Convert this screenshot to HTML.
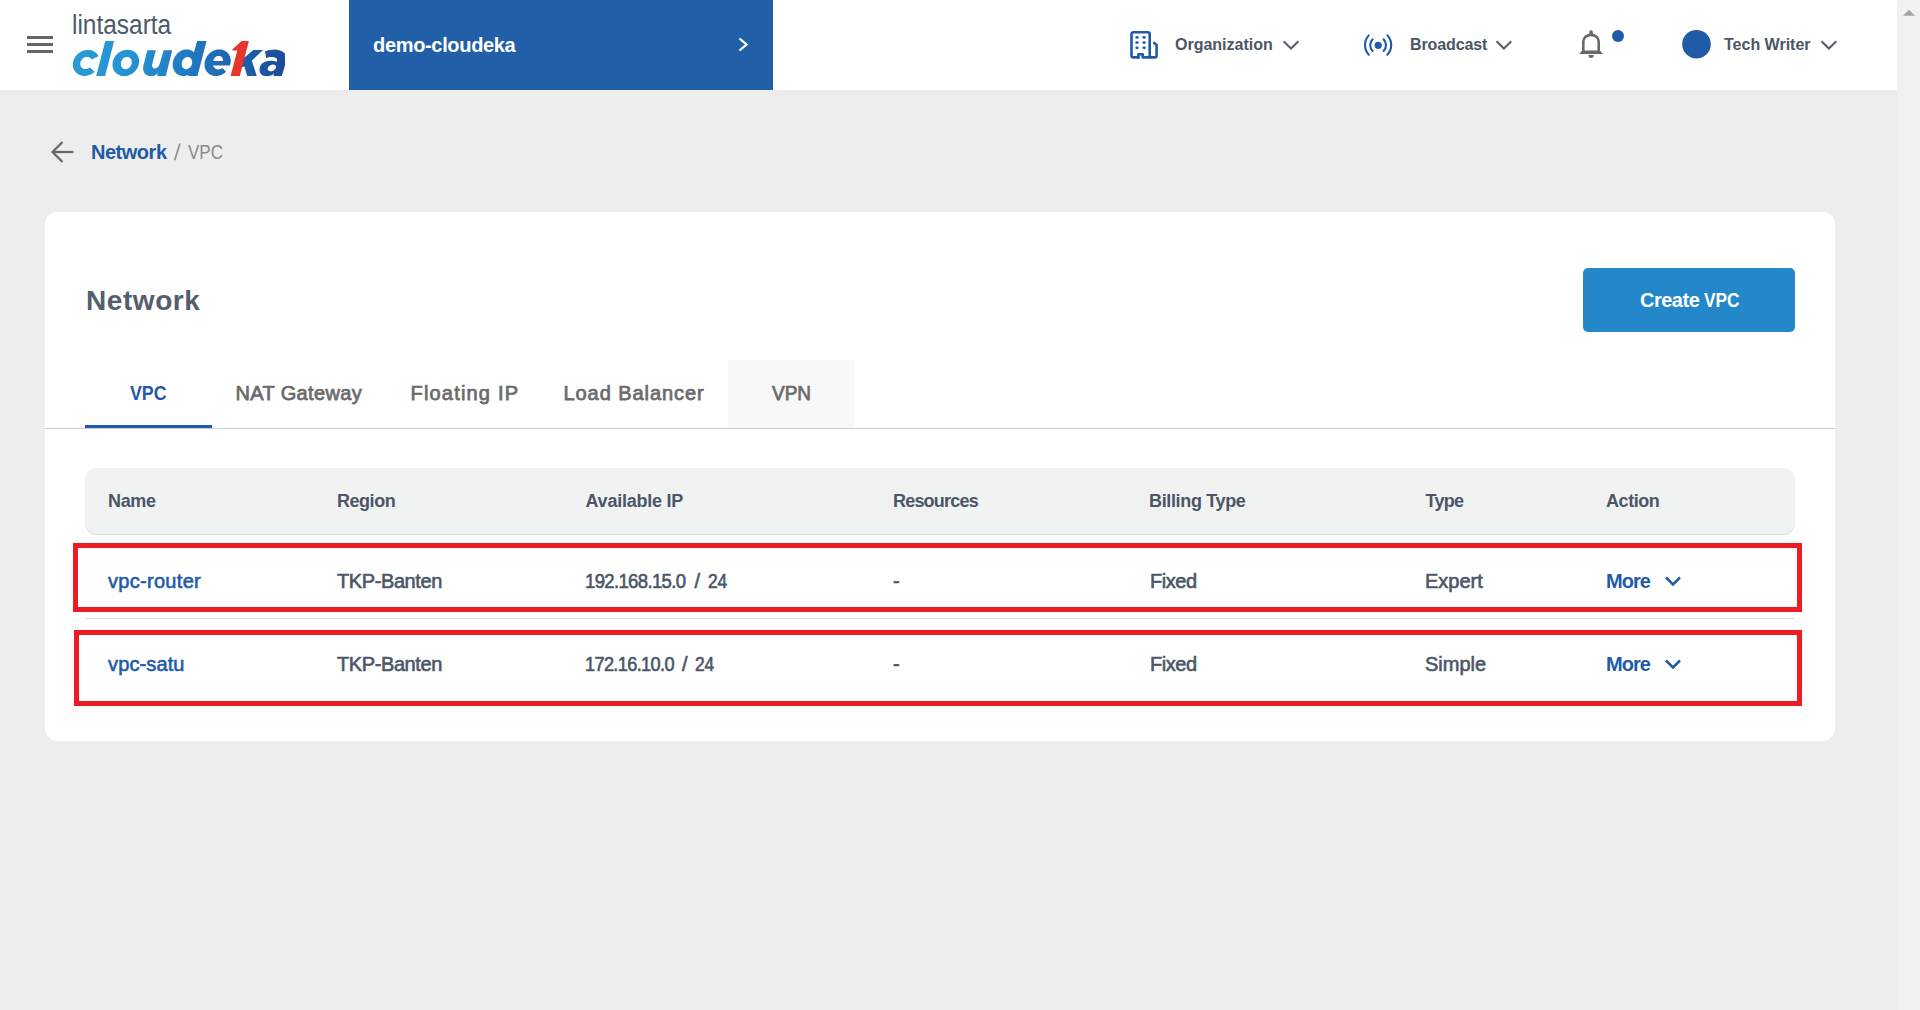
<!DOCTYPE html>
<html>
<head>
<meta charset="utf-8">
<style>
html,body{margin:0;padding:0;width:1920px;height:1010px;overflow:hidden;background:#ededed;}
body{position:relative;font-family:"Liberation Sans",sans-serif;}
.a{position:absolute;white-space:nowrap;line-height:1;}
.b{font-weight:bold;}
#hdr{position:absolute;left:0;top:0;width:1897px;height:90px;background:#fff;}
#proj{position:absolute;left:349px;top:0;width:424px;height:90px;background:#2160a8;}
#sb{position:absolute;left:1897px;top:0;width:23px;height:1010px;background:#f1f1f1;}
#card{position:absolute;left:45px;top:212px;width:1790px;height:529px;background:#fff;border-radius:12px;}
.slate{color:#4b5668;}
.blue{color:#1f5ba8;}
.tab{color:#6b6b6b;font-size:20px;font-weight:normal;-webkit-text-stroke:0.75px currentColor;}
.th{font-size:18px;font-weight:bold;color:#4b5668;}
.td{font-size:20px;font-weight:normal;color:#4b5668;-webkit-text-stroke:0.6px currentColor;}
.red{position:absolute;border:5px solid #ed1c24;box-sizing:border-box;}
svg{position:absolute;overflow:visible;}
</style>
</head>
<body>
<div id="hdr"></div>
<!-- hamburger -->
<div style="position:absolute;left:27px;top:36px;width:26px;height:3px;background:#666;"></div>
<div style="position:absolute;left:27px;top:43px;width:26px;height:3px;background:#666;"></div>
<div style="position:absolute;left:27px;top:50px;width:26px;height:3px;background:#666;"></div>

<!-- logo -->
<div class="a" style="left:72px;top:12px;font-size:27px;color:#4b5a6b;transform:scaleX(0.905);transform-origin:0 0;">lintasarta</div>
<svg style="left:0;top:0" width="300" height="90">
  <defs>
    <linearGradient id="lg" gradientUnits="userSpaceOnUse" x1="72" y1="0" x2="285" y2="0">
      <stop offset="0" stop-color="#2a9ad8"/>
      <stop offset="0.27" stop-color="#2593d3"/>
      <stop offset="0.55" stop-color="#2179c1"/>
      <stop offset="0.74" stop-color="#1f66b1"/>
      <stop offset="1" stop-color="#1b4b98"/>
    </linearGradient>
  </defs>
  <path fill="url(#lg)" d="M97.90,56.50 L98.47,56.20 L97.95,55.26 L97.34,54.37 L96.65,53.54 L95.87,52.79 L95.02,52.11 L94.11,51.52 L93.13,51.01 L92.10,50.60 L91.02,50.28 L89.91,50.05 L88.77,49.93 L87.61,49.90 L86.44,49.98 L85.26,50.15 L84.10,50.42 L82.95,50.79 L81.82,51.25 L80.73,51.79 L79.68,52.43 L78.68,53.14 L77.74,53.93 L76.86,54.79 L76.06,55.71 L75.33,56.68 L74.68,57.70 L74.13,58.77 L73.66,59.86 L73.30,60.98 L73.03,62.11 L72.86,63.25 L72.79,64.38 L72.83,65.51 L72.97,66.61 L73.21,67.68 L73.55,68.72 L73.99,69.72 L74.52,70.66 L75.14,71.54 L75.85,72.36 L76.63,73.10 L77.49,73.77 L78.41,74.35 L79.40,74.84 L80.43,75.25 L81.52,75.56 L82.63,75.77 L83.78,75.88 L84.94,75.89 L86.11,75.81 L87.28,75.62 L88.45,75.34 L89.60,74.96 L90.72,74.49 L91.80,73.93 L92.85,73.29 L93.84,72.56 L94.77,71.77 L94.30,71.50 L89.30,66.90 L89.81,67.46 L89.37,67.81 L88.90,68.12 L88.41,68.39 L87.91,68.62 L87.39,68.80 L86.87,68.95 L86.34,69.04 L85.81,69.09 L85.28,69.10 L84.76,69.05 L84.26,68.96 L83.77,68.83 L83.30,68.65 L82.85,68.42 L82.43,68.16 L82.03,67.85 L81.68,67.51 L81.35,67.14 L81.07,66.73 L80.82,66.29 L80.62,65.83 L80.46,65.34 L80.34,64.84 L80.27,64.33 L80.25,63.80 L80.27,63.27 L80.34,62.74 L80.45,62.20 L80.61,61.68 L80.82,61.16 L81.06,60.66 L81.35,60.18 L81.67,59.71 L82.03,59.28 L82.42,58.87 L82.84,58.49 L83.29,58.15 L83.76,57.85 L84.25,57.58 L84.76,57.36 L85.28,57.17 L85.80,57.04 L86.33,56.95 L86.86,56.90 L87.39,56.91 L87.90,56.96 L88.41,57.05 L88.89,57.19 L89.36,57.38 L89.81,57.61 L90.23,57.88 L90.61,58.19 L90.97,58.53 L91.29,58.92 L91.57,59.33 L91.81,59.77 L91.20,59.80 Z"/><path fill="url(#lg)" d="M96.20,76.00 L105.10,76.00 L114.10,41.00 L105.30,41.00 Z"/><path fill="url(#lg)" d="M139.00,62.90 L138.80,64.05 L138.50,65.19 L138.11,66.32 L137.62,67.41 L137.04,68.48 L136.37,69.50 L135.63,70.47 L134.81,71.38 L133.92,72.23 L132.97,73.01 L131.97,73.71 L130.91,74.33 L129.82,74.86 L128.70,75.30 L127.56,75.65 L126.40,75.90 L125.24,76.05 L124.08,76.10 L122.94,76.05 L121.82,75.90 L120.73,75.65 L119.67,75.30 L118.67,74.86 L117.71,74.33 L116.82,73.71 L116.00,73.01 L115.25,72.23 L114.59,71.38 L114.00,70.47 L113.51,69.50 L113.11,68.48 L112.81,67.41 L112.61,66.32 L112.50,65.19 L112.50,64.05 L112.60,62.90 L112.80,61.75 L113.10,60.61 L113.49,59.48 L113.98,58.39 L114.56,57.32 L115.23,56.30 L115.97,55.33 L116.79,54.42 L117.68,53.57 L118.63,52.79 L119.63,52.09 L120.69,51.47 L121.78,50.94 L122.90,50.50 L124.04,50.15 L125.20,49.90 L126.36,49.75 L127.52,49.70 L128.66,49.75 L129.78,49.90 L130.87,50.15 L131.93,50.50 L132.93,50.94 L133.89,51.47 L134.78,52.09 L135.60,52.79 L136.35,53.57 L137.01,54.42 L137.60,55.33 L138.09,56.30 L138.49,57.32 L138.79,58.39 L138.99,59.48 L139.10,60.61 L139.10,61.75 L139.00,62.90 Z"/><path fill="url(#lg)" d="M147.30,50.30 L143.10,67.10 L143.30,70.50 L144.60,73.60 L147.10,75.60 L150.00,76.10 L153.30,76.00 L155.60,75.00 L157.70,73.30 L157.10,76.00 L165.80,76.00 L172.20,50.30 L163.70,50.30 L159.50,64.60 L158.10,67.10 L155.40,68.60 L153.20,68.20 L152.20,66.50 L152.00,65.00 L155.80,50.30 Z"/><path fill="url(#lg)" d="M197.20,62.70 L197.00,63.86 L196.71,65.01 L196.34,66.14 L195.87,67.25 L195.33,68.32 L194.70,69.35 L194.00,70.33 L193.23,71.25 L192.40,72.10 L191.52,72.89 L190.58,73.59 L189.60,74.22 L188.59,74.75 L187.55,75.20 L186.49,75.55 L185.42,75.80 L184.34,75.95 L183.27,76.00 L182.21,75.95 L181.18,75.80 L180.17,75.55 L179.20,75.20 L178.28,74.75 L177.40,74.22 L176.59,73.59 L175.83,72.89 L175.15,72.10 L174.54,71.25 L174.01,70.33 L173.57,69.35 L173.21,68.32 L172.94,67.25 L172.77,66.14 L172.69,65.01 L172.70,63.86 L172.80,62.70 L173.00,61.54 L173.29,60.39 L173.66,59.26 L174.13,58.15 L174.67,57.08 L175.30,56.05 L176.00,55.07 L176.77,54.15 L177.60,53.30 L178.48,52.51 L179.42,51.81 L180.40,51.18 L181.41,50.65 L182.45,50.20 L183.51,49.85 L184.58,49.60 L185.66,49.45 L186.73,49.40 L187.79,49.45 L188.82,49.60 L189.83,49.85 L190.80,50.20 L191.72,50.65 L192.60,51.18 L193.41,51.81 L194.17,52.51 L194.85,53.30 L195.46,54.15 L195.99,55.07 L196.43,56.05 L196.79,57.08 L197.06,58.15 L197.23,59.26 L197.31,60.39 L197.30,61.54 L197.20,62.70 Z"/><path fill="url(#lg)" d="M188.40,73.30 L188.20,76.00 L197.50,76.00 L206.50,41.00 L197.10,41.00 L193.60,53.40 Z"/><path fill="url(#lg)" d="M230.60,62.70 L230.40,63.86 L230.10,65.01 L229.71,66.14 L229.22,67.25 L228.65,68.32 L227.99,69.35 L227.26,70.33 L226.45,71.25 L225.57,72.10 L224.63,72.89 L223.64,73.59 L222.60,74.22 L221.53,74.75 L220.42,75.20 L219.29,75.55 L218.15,75.80 L217.01,75.95 L215.87,76.00 L214.74,75.95 L213.64,75.80 L212.57,75.55 L211.53,75.20 L210.54,74.75 L209.60,74.22 L208.73,73.59 L207.92,72.89 L207.19,72.10 L206.53,71.25 L205.96,70.33 L205.48,69.35 L205.09,68.32 L204.79,67.25 L204.60,66.14 L204.50,65.01 L204.50,63.86 L204.60,62.70 L204.80,61.54 L205.10,60.39 L205.49,59.26 L205.98,58.15 L206.55,57.08 L207.21,56.05 L207.94,55.07 L208.75,54.15 L209.63,53.30 L210.57,52.51 L211.56,51.81 L212.60,51.18 L213.67,50.65 L214.78,50.20 L215.91,49.85 L217.05,49.60 L218.19,49.45 L219.33,49.40 L220.46,49.45 L221.56,49.60 L222.63,49.85 L223.67,50.20 L224.66,50.65 L225.60,51.18 L226.47,51.81 L227.28,52.51 L228.01,53.30 L228.67,54.15 L229.24,55.07 L229.72,56.05 L230.11,57.08 L230.41,58.15 L230.60,59.26 L230.70,60.39 L230.70,61.54 L230.60,62.70 Z"/>
  <path fill="#fff" d="M131.70,63.05 L131.61,63.59 L131.48,64.12 L131.31,64.64 L131.10,65.15 L130.86,65.65 L130.58,66.12 L130.26,66.58 L129.92,67.00 L129.55,67.40 L129.16,67.76 L128.74,68.09 L128.31,68.38 L127.86,68.62 L127.40,68.83 L126.93,68.99 L126.45,69.11 L125.97,69.18 L125.50,69.20 L125.03,69.18 L124.57,69.11 L124.13,68.99 L123.70,68.83 L123.29,68.62 L122.91,68.38 L122.55,68.09 L122.22,67.76 L121.92,67.40 L121.65,67.00 L121.42,66.58 L121.22,66.12 L121.07,65.65 L120.95,65.15 L120.88,64.64 L120.84,64.12 L120.85,63.59 L120.90,63.05 L120.99,62.51 L121.12,61.98 L121.29,61.46 L121.50,60.95 L121.74,60.45 L122.02,59.97 L122.34,59.52 L122.68,59.10 L123.05,58.70 L123.44,58.34 L123.86,58.01 L124.29,57.72 L124.74,57.48 L125.20,57.27 L125.67,57.11 L126.15,56.99 L126.63,56.92 L127.10,56.90 L127.57,56.92 L128.03,56.99 L128.47,57.11 L128.90,57.27 L129.31,57.48 L129.69,57.72 L130.05,58.01 L130.38,58.34 L130.68,58.70 L130.95,59.10 L131.18,59.52 L131.38,59.97 L131.53,60.45 L131.65,60.95 L131.72,61.46 L131.76,61.98 L131.75,62.51 L131.70,63.05 Z M192.10,63.10 L192.01,63.63 L191.88,64.15 L191.72,64.67 L191.52,65.17 L191.28,65.66 L191.01,66.12 L190.71,66.57 L190.38,66.99 L190.02,67.38 L189.64,67.73 L189.24,68.06 L188.82,68.34 L188.38,68.58 L187.94,68.79 L187.49,68.94 L187.03,69.06 L186.57,69.13 L186.11,69.15 L185.66,69.13 L185.22,69.06 L184.79,68.94 L184.38,68.79 L183.99,68.58 L183.62,68.34 L183.27,68.06 L182.96,67.73 L182.67,67.38 L182.41,66.99 L182.19,66.57 L182.00,66.12 L181.85,65.66 L181.74,65.17 L181.67,64.67 L181.64,64.15 L181.65,63.63 L181.70,63.10 L181.79,62.57 L181.92,62.05 L182.08,61.53 L182.28,61.03 L182.52,60.54 L182.79,60.08 L183.09,59.63 L183.42,59.21 L183.78,58.82 L184.16,58.47 L184.56,58.14 L184.98,57.86 L185.42,57.62 L185.86,57.41 L186.31,57.26 L186.77,57.14 L187.23,57.07 L187.69,57.05 L188.14,57.07 L188.58,57.14 L189.01,57.26 L189.42,57.41 L189.81,57.62 L190.18,57.86 L190.53,58.14 L190.84,58.47 L191.13,58.82 L191.39,59.21 L191.61,59.63 L191.80,60.07 L191.95,60.54 L192.06,61.03 L192.13,61.53 L192.16,62.05 L192.15,62.57 L192.10,63.10 Z M213.30,60.90 L213.30,60.90 L213.37,60.46 L213.49,60.03 L213.63,59.61 L213.81,59.19 L214.02,58.79 L214.27,58.40 L214.54,58.03 L214.84,57.69 L215.17,57.36 L215.51,57.07 L215.88,56.80 L216.26,56.57 L216.66,56.37 L217.07,56.20 L217.49,56.07 L217.91,55.98 L218.33,55.92 L218.75,55.90 L219.17,55.92 L219.57,55.98 L219.97,56.07 L220.35,56.20 L220.72,56.37 L221.06,56.57 L221.39,56.80 L221.68,57.07 L221.95,57.36 L222.19,57.69 L222.40,58.03 L222.58,58.40 L222.72,58.79 L222.83,59.19 L222.90,59.61 L222.94,60.03 L222.94,60.46 L222.90,60.90 L222.90,60.90 Z M212.90,65.40 L232.00,65.40 L232.00,71.20 L226.80,72.50 L222.50,67.90 L220.00,69.20 L217.50,69.60 L215.20,68.60 L213.50,66.80 Z"/>
  <path fill="url(#lg)" d="M244.50,57.50 L253.30,50.10 L263.00,50.10 L251.80,60.70 L256.80,76.00 L247.20,76.00 L244.50,66.70 L240.00,67.00 L241.00,58.00 Z"/>
  <path fill="#e8352c" d="M230.60,76.00 L239.80,76.00 L248.90,41.00 L241.60,41.00 L232.50,49.30 L232.50,50.40 L237.30,50.40 Z"/>
  <path fill="url(#lg)" d="M265.10,51.30 L268.50,50.20 L272.00,49.70 L275.00,49.60 L278.50,49.90 L282.00,51.20 L284.90,53.40 L285.10,65.00 L281.80,76.00 L273.40,76.00 L273.90,73.30 L272.50,74.80 L270.50,75.80 L268.00,76.10 L265.00,76.00 L262.40,75.60 L260.60,73.80 L259.60,71.50 L259.50,68.80 L260.30,66.00 L262.00,63.60 L264.50,62.00 L267.50,61.00 L270.70,60.70 L274.00,61.00 L277.00,61.70 L277.00,58.80 L275.00,57.40 L272.80,56.90 L269.50,57.10 L266.20,58.00 Z"/>
  <path fill="#fff" d="M275.85,67.95 L275.73,68.24 L275.59,68.53 L275.41,68.82 L275.21,69.10 L274.98,69.37 L274.73,69.62 L274.45,69.87 L274.16,70.10 L273.85,70.32 L273.52,70.52 L273.18,70.69 L272.83,70.85 L272.48,70.99 L272.12,71.10 L271.75,71.19 L271.39,71.25 L271.03,71.29 L270.68,71.30 L270.33,71.29 L270.00,71.25 L269.68,71.19 L269.38,71.10 L269.10,70.99 L268.83,70.85 L268.60,70.69 L268.38,70.52 L268.19,70.32 L268.03,70.10 L267.90,69.87 L267.80,69.62 L267.73,69.37 L267.69,69.10 L267.68,68.82 L267.71,68.53 L267.76,68.24 L267.85,67.95 L267.97,67.66 L268.11,67.37 L268.29,67.08 L268.49,66.80 L268.72,66.53 L268.97,66.28 L269.25,66.03 L269.54,65.80 L269.85,65.58 L270.18,65.38 L270.52,65.21 L270.87,65.05 L271.22,64.91 L271.58,64.80 L271.95,64.71 L272.31,64.65 L272.67,64.61 L273.02,64.60 L273.37,64.61 L273.70,64.65 L274.02,64.71 L274.32,64.80 L274.60,64.91 L274.87,65.05 L275.10,65.21 L275.32,65.38 L275.51,65.58 L275.67,65.80 L275.80,66.03 L275.90,66.28 L275.97,66.53 L276.01,66.80 L276.02,67.08 L275.99,67.37 L275.94,67.66 L275.85,67.95 Z"/>
</svg>

<div id="proj"></div>
<div class="a b" style="left:373px;top:35px;font-size:20px;color:#fff;letter-spacing:-0.33px;">demo-cloudeka</div>
<svg style="left:0;top:0" width="1" height="1"><path d="M739.5,38.5 L746.5,44.5 L739.5,50.5" fill="none" stroke="#fff" stroke-width="2.3"/></svg>

<!-- header right -->
<svg style="left:0;top:0" width="1" height="1">
  <g fill="none" stroke="#1f5ba8" stroke-width="2.6" stroke-linecap="round" stroke-linejoin="round">
    <path d="M1138.4,57.4 H1133.5 Q1131.5,57.4 1131.5,55.4 V34.3 Q1131.5,32.3 1133.5,32.3 H1147.7 Q1149.7,32.3 1149.7,34.3 V57.4"/>
    <path d="M1138.4,57.4 V54.3 H1142.7 V57.4 H1155 Q1156.6,57.4 1156.6,55.8 V44.9 L1154.2,42.9"/>
  </g>
  <g fill="#1f5ba8">
    <ellipse cx="1137" cy="37.4" rx="1.7" ry="1.4"/><ellipse cx="1144.1" cy="37.4" rx="1.7" ry="1.4"/>
    <ellipse cx="1137" cy="42.6" rx="1.7" ry="1.4"/><ellipse cx="1144.1" cy="42.6" rx="1.7" ry="1.4"/>
    <ellipse cx="1137" cy="47.8" rx="1.7" ry="1.4"/><ellipse cx="1144.1" cy="47.8" rx="1.7" ry="1.4"/>
  </g>
</svg>
<div class="a b slate" style="left:1175px;top:37px;font-size:16px;">Organization</div>
<svg style="left:0;top:0" width="1" height="1"><path d="M1283.6,41.2 L1291,48.6 L1298.4,41.2" fill="none" stroke="#5a606b" stroke-width="2.1"/></svg>

<svg style="left:0;top:0" width="1" height="1">
  <g fill="none" stroke="#1f5ba8" stroke-width="2.1" stroke-linecap="round">
    <path d="M1368.8,35.4 A14.1,14.1 0 0 0 1368.8,54.7"/>
    <path d="M1372.6,39.3 A8.2,8.2 0 0 0 1372.6,50.9"/>
    <path d="M1387.4,35.4 A14.1,14.1 0 0 1 1387.4,54.7"/>
    <path d="M1383.6,39.3 A8.2,8.2 0 0 1 1383.6,50.9"/>
  </g>
  <circle cx="1378.2" cy="45.3" r="3.6" fill="#1f5ba8"/>
</svg>
<div class="a b slate" style="left:1410px;top:37px;font-size:16px;letter-spacing:-0.12px;">Broadcast</div>
<svg style="left:0;top:0" width="1" height="1"><path d="M1496.5,41.2 L1503.9,48.6 L1511.3,41.2" fill="none" stroke="#5a606b" stroke-width="2.1"/></svg>

<svg style="left:0;top:0" width="1" height="1">
  <path d="M1583.3,51.5 V41.6 A7.7,6.8 0 0 1 1598.7,41.6 V51.5" fill="none" stroke="#696969" stroke-width="2.6"/>
  <path d="M1579.1,53.9 L1582.2,50.6 H1599.8 L1603.1,53.9 Z" fill="#696969"/>
  <rect x="1589.2" y="30.2" width="3.7" height="5" rx="1.8" fill="#696969"/>
  <path d="M1588.3,55.1 H1593.8 A2.75,2.9 0 0 1 1588.3,55.1 Z" fill="#696969"/>
  <circle cx="1618" cy="36" r="6" fill="#1f5ba8"/>
</svg>

<svg style="left:0;top:0" width="1" height="1"><circle cx="1696.5" cy="44.2" r="14.3" fill="#1f5ba8"/></svg>
<div class="a b slate" style="left:1724px;top:37px;font-size:16px;">Tech Writer</div>
<svg style="left:0;top:0" width="1" height="1"><path d="M1821.5,41.2 L1828.9,48.6 L1836.3,41.2" fill="none" stroke="#5a606b" stroke-width="2.1"/></svg>

<!-- scrollbar -->
<div id="sb"></div>
<svg style="left:0;top:0" width="1" height="1"><path d="M1903,15.7 L1909,9.8 L1915,15.7 Z" fill="#a3a3a3"/></svg>

<!-- breadcrumb -->
<svg style="left:0;top:0" width="1" height="1">
  <g fill="none" stroke="#666" stroke-width="2.2">
    <path d="M73.5,152 H53"/>
    <path d="M62.5,142 L52.5,152 L62.5,162"/>
  </g>
</svg>
<div class="a b blue" style="left:91px;top:142.07px;font-size:20px;letter-spacing:-0.48px;">Network</div>
<svg style="left:0;top:0" width="1" height="1"><path d="M179.9,143.6 L174.7,160.3" stroke="#8e8e8e" stroke-width="1.7" stroke-linecap="butt"/></svg>
<div class="a" style="left:188px;top:142.07px;font-size:20px;color:#8a8a8a;transform:scaleX(0.85);transform-origin:0 0;">VPC</div>

<!-- card -->
<div id="card"></div>
<div class="a b" style="left:86px;top:287px;font-size:28px;color:#535e6e;letter-spacing:0.57px;">Network</div>
<div style="position:absolute;left:1583px;top:268px;width:212px;height:64px;background:#2387ca;border-radius:5px;"></div>
<div class="a b" style="left:1640px;top:290.07px;font-size:20px;color:#fff;letter-spacing:-0.5px;">Create</div><div class="a b" style="left:1704px;top:290.07px;font-size:20px;color:#fff;transform:scaleX(0.865);transform-origin:0 0;">VPC</div>

<!-- tabs -->
<div style="position:absolute;left:728px;top:360px;width:127px;height:68px;background:#f8f8f8;"></div>
<div style="position:absolute;left:45px;top:428px;width:1790px;height:1px;background:#d0d0d0;"></div>
<div style="position:absolute;left:85px;top:425px;width:127px;height:3px;background:#1f5ba8;"></div>
<div class="a tab" style="left:129.5px;top:383.07px;color:#1f5ba8;font-weight:bold;-webkit-text-stroke:0;letter-spacing:0px;transform:scaleX(0.89);transform-origin:0 0;">VPC</div>
<div class="a tab" style="left:235.5px;top:383.07px;letter-spacing:0.37px;">NAT Gateway</div>
<div class="a tab" style="left:410.5px;top:383.07px;letter-spacing:1.19px;">Floating IP</div>
<div class="a tab" style="left:563.5px;top:383.07px;letter-spacing:0.93px;">Load Balancer</div>
<div class="a tab" style="left:771.5px;top:383.07px;letter-spacing:0px;transform:scaleX(0.95);transform-origin:0 0;">VPN</div>

<!-- table header -->
<div style="position:absolute;left:85px;top:468px;width:1710px;height:66px;background:#f1f2f2;border-radius:12px;box-shadow:0 1px 0 #d8dbdb;"></div>
<div class="a th" style="left:108px;top:491.76px;letter-spacing:-0.37px;">Name</div>
<div class="a th" style="left:337px;top:491.76px;letter-spacing:-0.46px;">Region</div>
<div class="a th" style="left:585.5px;top:491.76px;letter-spacing:-0.23px;">Available IP</div>
<div class="a th" style="left:893px;top:491.76px;letter-spacing:-0.8px;">Resources</div>
<div class="a th" style="left:1149px;top:491.76px;letter-spacing:-0.35px;">Billing Type</div>
<div class="a th" style="left:1425.5px;top:491.76px;letter-spacing:-0.73px;">Type</div>
<div class="a th" style="left:1606px;top:491.76px;letter-spacing:-0.44px;">Action</div>

<!-- rows -->
<div style="position:absolute;left:85px;top:618px;width:1710px;height:1px;background:#dddddd;"></div>

<div class="a td" style="left:108px;top:571.07px;color:#1f5ba8;letter-spacing:0.3px;">vpc-router</div>
<div class="a td" style="left:337px;top:571.07px;letter-spacing:-0.4px;">TKP-Banten</div>
<div class="a td" style="left:585px;top:571.07px;letter-spacing:-0.7px;transform:scaleX(0.926);transform-origin:0 0;">192.168.15.0</div><div class="a td" style="left:694.5px;top:571.07px;">/</div><div class="a td" style="left:707.5px;top:571.07px;letter-spacing:-0.3px;transform:scaleX(0.87);transform-origin:0 0;">24</div>
<div class="a td" style="left:893px;top:571.07px;">-</div>
<div class="a td" style="left:1150px;top:571.07px;letter-spacing:-0.45px;">Fixed</div>
<div class="a td" style="left:1425px;top:571.07px;">Expert</div>
<div class="a td" style="left:1606px;top:571.07px;color:#1f5ba8;font-weight:bold;-webkit-text-stroke:0;letter-spacing:-1px;">More</div>
<svg style="left:0;top:0" width="1" height="1"><path d="M1666,577.5 L1673,584.5 L1680,577.5" fill="none" stroke="#1f5ba8" stroke-width="2.5"/></svg>

<div class="a td" style="left:108px;top:654.07px;color:#1f5ba8;letter-spacing:0.13px;">vpc-satu</div>
<div class="a td" style="left:337px;top:654.07px;letter-spacing:-0.4px;">TKP-Banten</div>
<div class="a td" style="left:585px;top:654.07px;letter-spacing:-0.7px;transform:scaleX(0.907);transform-origin:0 0;">172.16.10.0</div><div class="a td" style="left:682px;top:654.07px;">/</div><div class="a td" style="left:695px;top:654.07px;letter-spacing:-0.3px;transform:scaleX(0.87);transform-origin:0 0;">24</div>
<div class="a td" style="left:893px;top:654.07px;">-</div>
<div class="a td" style="left:1150px;top:654.07px;letter-spacing:-0.45px;">Fixed</div>
<div class="a td" style="left:1425px;top:654.07px;">Simple</div>
<div class="a td" style="left:1606px;top:654.07px;color:#1f5ba8;font-weight:bold;-webkit-text-stroke:0;letter-spacing:-1px;">More</div>
<svg style="left:0;top:0" width="1" height="1"><path d="M1666,660.5 L1673,667.5 L1680,660.5" fill="none" stroke="#1f5ba8" stroke-width="2.5"/></svg>

<!-- red annotation boxes -->
<div class="red" style="left:73px;top:543px;width:1729px;height:69px;"></div>
<div class="red" style="left:74px;top:630px;width:1728px;height:76px;"></div>
</body>
</html>
